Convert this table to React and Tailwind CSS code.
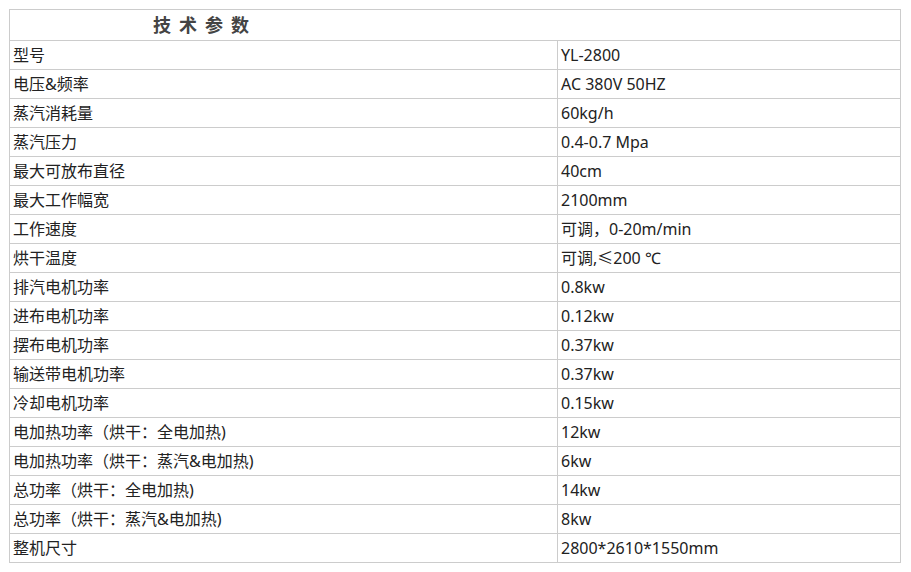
const rows = [
  ["型号", "YL-2800"],
  ["电压&频率", "AC 380V 50HZ"],
  ["蒸汽消耗量", "60kg/h"],
  ["蒸汽压力", "0.4-0.7 Mpa"],
  ["最大可放布直径", "40cm"],
  ["最大工作幅宽", "2100mm"],
  ["工作速度", "可调，0-20m/min"],
  ["烘干温度", "可调,≤200 ℃"],
  ["排汽电机功率", "0.8kw"],
  ["进布电机功率", "0.12kw"],
  ["摆布电机功率", "0.37kw"],
  ["输送带电机功率", "0.37kw"],
  ["冷却电机功率", "0.15kw"],
  ["电加热功率（烘干：全电加热)", "12kw"],
  ["电加热功率（烘干：蒸汽&电加热)", "6kw"],
  ["总功率（烘干：全电加热)", "14kw"],
  ["总功率（烘干：蒸汽&电加热)", "8kw"],
  ["整机尺寸", "2800*2610*1550mm"],
];

export default function App() {
  return (
    <div className="bg-white w-[911px] h-[572px] pt-[9px] pl-[9px] font-['Noto_Sans','Noto_Sans_CJK_SC',sans-serif] text-[#222]">
      <table className="border-collapse w-[892px] text-[16px]">
        <tbody>
          <tr className="h-[31px]">
            <td colSpan={2} className="border border-[#cccccc] pl-[143px] text-[18px] font-bold tracking-[8px] text-[#444] leading-none">
              技术参数
            </td>
          </tr>
          {rows.map(([k, v]) => (
            <tr key={k} className="h-[29px]">
              <td className="border border-[#cccccc] w-[548px] px-[3px] leading-none">{k}</td>
              <td className="border border-[#cccccc] px-[3px] leading-none">{v}</td>
            </tr>
          ))}
        </tbody>
      </table>
    </div>
  );
}
